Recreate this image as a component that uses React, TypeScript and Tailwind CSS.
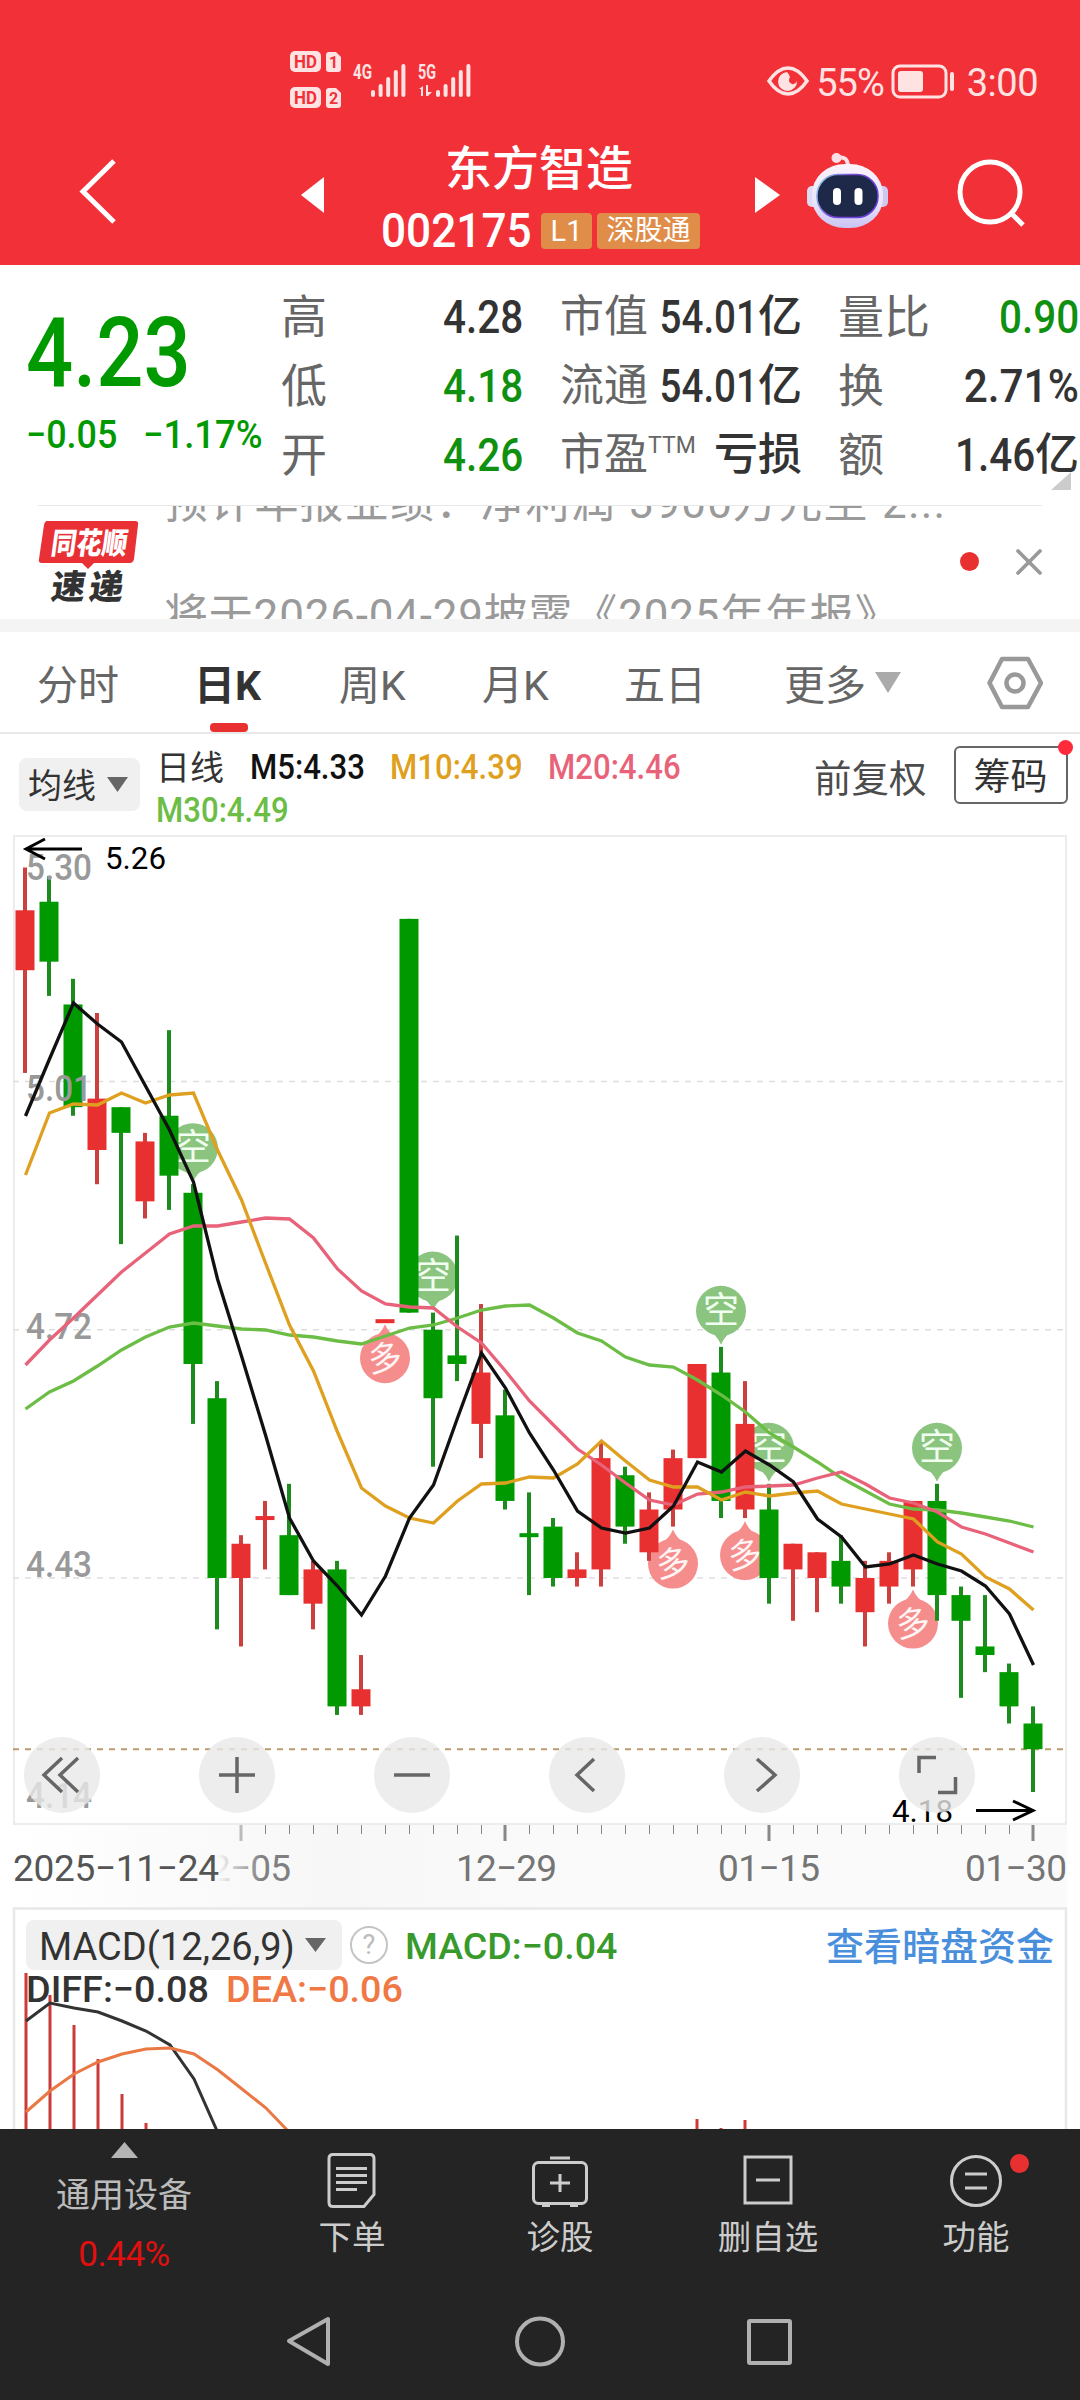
import type { ReactNode } from "react";
import { X } from "lucide-react";

const UP = "#e83030";
const DOWN = "#009900";

// [open/close top, open/close bottom, high, low, direction]
type Candle = [number, number, number, number, "up" | "down"];

const candles: Candle[] = [
  [5.21, 5.14, 5.26, 5.02, "up"],
  [5.22, 5.15, 5.25, 5.11, "down"],
  [5.1, 4.98, 5.13, 4.97, "down"],
  [4.99, 4.93, 5.09, 4.89, "up"],
  [4.98, 4.95, 4.98, 4.82, "down"],
  [4.94, 4.87, 4.95, 4.85, "up"],
  [4.97, 4.9, 5.07, 4.86, "down"],
  [4.88, 4.68, 4.89, 4.61, "down"],
  [4.64, 4.43, 4.66, 4.37, "down"],
  [4.47, 4.43, 4.48, 4.35, "up"],
  [4.5, 4.5, 4.52, 4.44, "up"],
  [4.48, 4.41, 4.54, 4.41, "down"],
  [4.44, 4.4, 4.45, 4.37, "up"],
  [4.44, 4.28, 4.45, 4.27, "down"],
  [4.3, 4.28, 4.34, 4.27, "up"],
  [4.73, 4.73, 4.73, 4.73, "up"],
  [5.2, 4.74, 5.2, 4.74, "down"],
  [4.72, 4.64, 4.74, 4.56, "down"],
  [4.69, 4.68, 4.83, 4.66, "down"],
  [4.67, 4.61, 4.75, 4.57, "up"],
  [4.62, 4.52, 4.65, 4.51, "down"],
  [4.48, 4.48, 4.53, 4.41, "down"],
  [4.49, 4.43, 4.5, 4.42, "down"],
  [4.44, 4.43, 4.46, 4.42, "up"],
  [4.57, 4.44, 4.59, 4.42, "up"],
  [4.55, 4.49, 4.56, 4.47, "down"],
  [4.51, 4.46, 4.53, 4.45, "up"],
  [4.57, 4.51, 4.58, 4.49, "up"],
  [4.68, 4.57, 4.68, 4.57, "up"],
  [4.67, 4.52, 4.7, 4.5, "down"],
  [4.61, 4.51, 4.66, 4.5, "up"],
  [4.51, 4.43, 4.54, 4.4, "down"],
  [4.47, 4.44, 4.47, 4.38, "up"],
  [4.46, 4.43, 4.46, 4.39, "up"],
  [4.45, 4.42, 4.48, 4.4, "down"],
  [4.43, 4.39, 4.45, 4.35, "up"],
  [4.45, 4.42, 4.46, 4.4, "up"],
  [4.52, 4.44, 4.52, 4.42, "up"],
  [4.52, 4.41, 4.54, 4.38, "down"],
  [4.41, 4.38, 4.42, 4.29, "down"],
  [4.35, 4.34, 4.41, 4.32, "down"],
  [4.32, 4.28, 4.33, 4.26, "down"],
  [4.26, 4.23, 4.28, 4.18, "down"],
];

const maLines = [
  {
    color: "#6cbd45",
    ys: [1409, 1392, 1381, 1366, 1350, 1337, 1327, 1323, 1326, 1329, 1330, 1335, 1337, 1341, 1344, 1336, 1328, 1325, 1318, 1310, 1306, 1305, 1318, 1333, 1341, 1357, 1365, 1367, 1380, 1395, 1412, 1433, 1447, 1462, 1478, 1491, 1504, 1509, 1510, 1513, 1517, 1521, 1527],
  },
  {
    color: "#e8637a",
    ys: [1365, 1340, 1318, 1295, 1272, 1253, 1234, 1226, 1226, 1222, 1218, 1219, 1238, 1269, 1291, 1304, 1307, 1308, 1327, 1343, 1371, 1401, 1425, 1449, 1465, 1483, 1500, 1505, 1494, 1492, 1487, 1486, 1485, 1478, 1472, 1484, 1498, 1503, 1512, 1527, 1534, 1543, 1552],
  },
  {
    color: "#dfa020",
    ys: [1175, 1113, 1104, 1105, 1093, 1103, 1095, 1093, 1150, 1200, 1263, 1325, 1371, 1432, 1488, 1506, 1518, 1523, 1501, 1484, 1483, 1477, 1478, 1464, 1441, 1461, 1480, 1487, 1487, 1500, 1492, 1496, 1493, 1491, 1504, 1509, 1514, 1519, 1542, 1554, 1577, 1589, 1610],
  },
  {
    color: "#111111",
    ys: [1116, 1059, 1003, 1024, 1042, 1086, 1130, 1182, 1279, 1356, 1435, 1518, 1561, 1586, 1615, 1576, 1518, 1485, 1418, 1353, 1388, 1433, 1470, 1511, 1528, 1533, 1528, 1506, 1462, 1472, 1451, 1465, 1482, 1519, 1537, 1567, 1564, 1555, 1564, 1571, 1586, 1614, 1665],
  },
];

const shorts = [7, 17, 29, 31, 38];
const longs = [15, 27, 30, 37];

const cx = (i: number) => 25 + i * 24;
const py = (price: number) => 867.5 + (5.26 - price) * 856;

const axisLabels = [
  { text: "5.30", y: 880 },
  { text: "5.01", y: 1101 },
  { text: "4.72", y: 1339 },
  { text: "4.43", y: 1577 },
  { text: "4.14", y: 1808 },
];

function StatusBar() {
  return (
    <div className="flex h-[130px] items-start justify-between pl-[289px] pr-[42px] pt-[50px]">
      <svg width="186" height="62" viewBox="289 50 186 62" fill="#ffe3e3" fontFamily="Roboto" fontWeight="700">
        {[51, 87].map((y, i) => (
          <g key={y}>
            <rect x="290" y={y} width="31" height="21" rx="5" />
            <text x="294" y={y + 17} fontSize="18" fill="#f23038" textLength="23" lengthAdjust="spacingAndGlyphs">HD</text>
            <path d={`M329 ${y + 1}h7l5 5v12q0 3-3 3h-9q-3 0-3-3v-14q0-3 3-3z`} />
            <text x="329" y={y + 17} fontSize="16" fill="#f23038">{i + 1}</text>
          </g>
        ))}
        <text x="353" y="79" fontSize="20" textLength="19" lengthAdjust="spacingAndGlyphs">4G</text>
        <text x="418" y="79" fontSize="20" textLength="18" lengthAdjust="spacingAndGlyphs">5G</text>
        {[371, 436].map((x) =>
          [7, 13, 20, 27, 33].map((h, i) => (
            <rect key={`${x}-${i}`} x={x + i * 7.6} y={97 - h} width="4" height={h} rx="2" />
          )),
        )}
        <path d="M419 89l4-3v10h-2v-7zM426 85h2v7h4l-4 4h-2z" />
      </svg>
      <div className="flex h-[62px] items-center text-[#ffe3e3]">
        <svg width="42" height="30" viewBox="0 0 42 30" fill="none" stroke="#ffe3e3" strokeWidth="3.5">
          <path d="M2 15Q11 2 21 2T40 15Q31 28 21 28T2 15z" />
          <path d="M20 6a9.5 9.5 0 1 0 10 9q-2 4-5 3q-5-2-2-7q-1-3-3-5z" fill="#ffe3e3" stroke="none" />
        </svg>
        <span className="ml-[7px] pt-[3px] text-[38px] leading-none tracking-[-1px]">55%</span>
        <svg className="ml-[7px]" width="64" height="35" viewBox="0 0 64 35" fill="none" stroke="#ffe3e3" strokeWidth="3">
          <rect x="2" y="2" width="53" height="31" rx="7" />
          <rect x="7" y="7" width="25" height="21" rx="3" fill="#ffe3e3" stroke="none" />
          <path d="M61 10v15" strokeWidth="4" strokeLinecap="round" />
        </svg>
        <span className="ml-[12px] pt-[3px] text-[38px] leading-none tracking-[-0.5px]">3:00</span>
      </div>
    </div>
  );
}

function Robot() {
  return (
    <svg width="84" height="80" viewBox="805 150 84 80">
      <defs>
        <linearGradient id="shell" x1="0" y1="0" x2="0" y2="1">
          <stop offset="0" stopColor="#fbf3fb" />
          <stop offset="0.6" stopColor="#e9e6fa" />
          <stop offset="1" stopColor="#c9c4f2" />
        </linearGradient>
        <linearGradient id="rim" x1="0" y1="0" x2="1" y2="0.4">
          <stop offset="0" stopColor="#8fe0ea" />
          <stop offset="0.5" stopColor="#7a48d8" />
          <stop offset="1" stopColor="#6a3fe0" />
        </linearGradient>
      </defs>
      <path d="M837 158q11-3 11 9" fill="none" stroke="#fbdfe6" strokeWidth="4" />
      <circle cx="836.500" cy="158" r="5" fill="#fbdfe6" />
      <rect x="807" y="186" width="12" height="21" rx="5" fill="#dfdaf6" />
      <rect x="876" y="186" width="12" height="21" rx="5" fill="#cfc8f3" />
      <rect x="812" y="164" width="71" height="64" rx="33" ry="30" fill="url(#shell)" />
      <rect x="817" y="174.500" width="61" height="43" rx="21" fill="#1e2848" stroke="url(#rim)" strokeWidth="1.500" />
      <rect x="833" y="188" width="8" height="17" rx="4" fill="#fff" />
      <rect x="854.500" y="188" width="8" height="17" rx="4" fill="#fff" />
    </svg>
  );
}

function Header() {
  return (
    <div className="flex h-[135px] items-start text-white">
      <svg className="ml-[76px] mt-[27px]" width="44" height="70" viewBox="0 0 44 70" fill="none" stroke="#fff" strokeWidth="5">
        <path d="M38 4L7 34.500L38 65" />
      </svg>
      <svg className="ml-[181px] mt-[46px]" width="24" height="38" viewBox="0 0 24 38" fill="#fff">
        <path d="M23 1v36L0 19z" />
      </svg>
      <div className="ml-[33px] flex w-[362px] flex-col items-center">
        <h1 className="mt-[16px] h-[46px] text-[47px] font-medium leading-[46px]">东方智造</h1>
        <div className="mt-[19px] flex h-[40px] w-full items-center pl-[23px]">
          <span className="w-[150px] origin-left scale-x-[0.92] text-[48px] font-medium leading-none">002175</span>
          <span className="ml-[10px] flex h-[36px] w-[51px] items-center justify-center rounded-[4px] bg-[#e08d4a] text-[29px] leading-none">L1</span>
          <span className="ml-[5px] flex h-[36px] w-[103px] shrink-0 items-center justify-center rounded-[4px] bg-[#e08d4a] text-[28px] leading-none">深股通</span>
        </div>
      </div>
      <svg className="ml-[35px] mt-[46px]" width="26" height="38" viewBox="0 0 26 38" fill="#fff">
        <path d="M0 1v36L25 19z" />
      </svg>
      <div className="ml-[24px] mt-[20px]">
        <Robot />
      </div>
      <svg className="ml-[67px] mt-[28px]" width="72" height="72" viewBox="956 158 72 72" fill="none" stroke="#fff" strokeWidth="5">
        <circle cx="990" cy="192" r="30" />
        <path d="M1011 213l12 12" />
      </svg>
    </div>
  );
}

type RowProps = {
  label: ReactNode;
  value?: string;
  unit?: string;
  color?: string;
  labelSize?: string;
  fit?: string;
};

function Row({ label, value, unit, color = "text-[#333]", labelSize = "text-[46px]", fit = "scale-x-[0.86]" }: RowProps) {
  return (
    <div className="flex h-[69px] items-center justify-between whitespace-nowrap">
      <span className={`flex leading-none text-[#666] ${labelSize}`}>{label}</span>
      <span className={`flex items-center font-medium leading-none ${color}`}>
        {value && <span className={`-ml-6 origin-right text-[47px] leading-none ${fit}`}>{value}</span>}
        {unit && <span className="text-[44px] leading-none">{unit}</span>}
      </span>
    </div>
  );
}

function Quote() {
  return (
    <div className="relative flex h-[240px] bg-white pt-[17px]">
      <div className="w-[281px] pl-[26px] text-[#009900]">
        <div className="mt-[23px] h-[96px] w-[170px] origin-left scale-x-[0.865] text-[96px] font-medium leading-none">4.23</div>
        <div className="mt-[15px] flex text-[39px] font-medium leading-none">
          <span className="w-[117px] origin-left scale-x-[0.92]">−0.05</span>
          <span className="origin-left scale-x-[0.935]">−1.17%</span>
        </div>
      </div>
      <div className="w-[242px]">
        <Row label="高" value="4.28" />
        <Row label="低" value="4.18" color="text-[#109010]" />
        <Row label="开" value="4.26" color="text-[#109010]" />
      </div>
      <div className="ml-[37px] w-[242px]">
        <Row label="市值" value="54.01" unit="亿" labelSize="text-[44px]" fit="scale-x-[0.82]" />
        <Row label="流通" value="54.01" unit="亿" labelSize="text-[44px]" fit="scale-x-[0.82]" />
        <Row label={<>市盈<sup className="top-0 pt-[1px] text-[23px] leading-none">TTM</sup></>} unit="亏损" labelSize="text-[44px]" />
      </div>
      <div className="ml-[36px] w-[241px]">
        <Row label="量比" value="0.90" color="text-[#109010]" />
        <Row label="换" value="2.71%" fit="scale-x-[0.9]" />
        <Row label="额" value="1.46" unit="亿" />
      </div>
      <svg className="absolute right-[9px] top-[207px]" width="20" height="18" viewBox="0 0 20 18" fill="#ccc">
        <path d="M20 0v18H0z" />
      </svg>
    </div>
  );
}

function Ticker() {
  return (
    <div className="relative flex h-[114px] overflow-hidden bg-white text-[44px] text-[#9a9a9a]">
      <div className="absolute left-[38px] right-[38px] top-0 h-px bg-[#e8e8e8]" />
      <svg className="ml-[36px] mt-[14px] shrink-0" width="106" height="92" viewBox="36 519 106 92" fontFamily="'Noto Sans CJK SC'" fontWeight="900">
        <path d="M47 521H135q4 0 3 4l-4 34q-1 4-4 4H94l-6 6l-6-6H42q-4 0-3-4l5-34q1-4 3-4z" fill="#e83035" />
        <text transform="translate(50 554) skewX(-8)" fontSize="30" fill="#fff" textLength="76" lengthAdjust="spacingAndGlyphs">同花顺</text>
        <text transform="translate(50 599) skewX(-8)" fontSize="34" fill="#333" textLength="72">速递</text>
      </svg>
      <div className="-mt-[27px] ml-[22px] flex w-[790px] flex-col whitespace-nowrap leading-[50px]">
        <span className="h-[113px] shrink-0 tracking-[1.2px]">预计年报业绩：净利润-3900万元至-2...</span>
        <span className="h-[50px] shrink-0 tracking-[0.8px]">将于2026-04-29披露《2025年年报》</span>
      </div>
      <span className="ml-[6px] mt-[47px] size-[19px] rounded-full bg-[#e83030]" />
      <X className="ml-[28px] mt-[35px]" size={44} strokeWidth={2} color="#999" />
    </div>
  );
}

const tabs = [
  { text: "分时", className: "w-[157px]" },
  { text: "日K", className: "w-[145px] font-bold text-[#333]" },
  { text: "周K", className: "w-[143px]" },
  { text: "月K", className: "w-[142px]" },
  { text: "五日", className: "w-[160px]" },
];

function Tabs() {
  return (
    <div className="relative flex h-[102px] items-center border-b-2 border-[#e8e8e8] bg-white pl-[37px] text-[41px] leading-none text-[#666]">
      {tabs.map((tab) => (
        <span key={tab.text} className={`pt-[8px] ${tab.className}`}>{tab.text}</span>
      ))}
      <span className="pt-[8px]">更多</span>
      <svg className="ml-[9px]" width="26" height="21" viewBox="0 0 26 21" fill="#aaa">
        <path d="M0 0h26L13 21z" />
      </svg>
      <svg className="ml-[86px] mt-[2px]" width="56" height="54" viewBox="0 0 56 54" fill="none" stroke="#999" strokeWidth="4.500" strokeLinejoin="round">
        <path d="M15 3h26l13 24l-13 24H15L2.500 27z" />
        <circle cx="28" cy="27" r="8.500" />
      </svg>
      <span className="absolute bottom-0 left-[210px] h-[9px] w-[38px] rounded-[4px] bg-[#e83030]" />
    </div>
  );
}

function MaBar() {
  return (
    <div className="flex h-[101px] bg-white pl-[19px]">
      <div className="mt-[24px] flex h-[53px] w-[121px] items-center rounded-[8px] bg-[#f0f0f0] pl-[9px] pt-[2px] text-[34px] leading-none text-[#333]">
        均线
        <svg className="mb-[3px] ml-[11px]" width="21" height="15" viewBox="0 0 21 15" fill="#666">
          <path d="M0 0h21L10.500 15z" />
        </svg>
      </div>
      <div className="ml-[16px] w-[658px] whitespace-nowrap pt-[12px] text-[35px] leading-[44px]">
        <div className="flex h-[43px]">
          <span className="w-[94px] text-[34px] text-[#333]">日线</span>
          <span className="w-[140px] origin-left scale-x-[0.89] font-medium text-[#111]">M5:4.33</span>
          <span className="w-[158px] origin-left scale-x-[0.89] font-medium text-[#dfa020]">M10:4.39</span>
          <span className="origin-left scale-x-[0.89] font-medium text-[#e8637a]">M20:4.46</span>
        </div>
        <div className="w-[150px] origin-left scale-x-[0.89] font-medium text-[#6cbd45]">M30:4.49</div>
      </div>
      <span className="mt-[27px] text-[37.500px] leading-[37px] text-[#4c4c4c]">前复权</span>
      <div className="relative ml-[27px] mt-[12px] flex h-[58px] w-[114px] items-center justify-center rounded-[6px] border-2 border-[#666] pt-[4px] text-[37px] leading-none text-[#333]">
        筹码
        <span className="absolute -right-[7px] -top-[8px] size-[15px] rounded-full bg-[#ff2b3c]" />
      </div>
    </div>
  );
}

function KLineChart() {
  return (
    <svg className="block" width="1080" height="1072" viewBox="0 835 1080 1072" fontFamily="Roboto, 'Noto Sans CJK SC', sans-serif">
      <defs>
        <linearGradient id="axisFade" x1="0" y1="0" x2="1" y2="0">
          <stop offset="0" stopColor="#fff" />
          <stop offset="0.300" stopColor="#f7f7f7" />
          <stop offset="0.500" stopColor="#fafafa" />
          <stop offset="1" stopColor="#fafafa" />
        </linearGradient>
        <linearGradient id="dateFade" x1="0" y1="0" x2="1" y2="0">
          <stop offset="0.450" stopColor="#fafafa" />
          <stop offset="1" stopColor="#f8f8f8" stopOpacity="0" />
        </linearGradient>
      </defs>
      <rect x="13" y="1825" width="1054" height="82" fill="url(#axisFade)" />
      <rect x="14" y="836" width="1052" height="988" fill="#fff" stroke="#ececec" strokeWidth="2" />

      {/* Grid */}
      {[5.01, 4.72, 4.43].map((p) => (
        <path key={p} d={`M13 ${py(p)}H1066`} stroke="#dedede" strokeWidth="1.500" strokeDasharray="6 6" />
      ))}
      <path d={`M13 ${py(4.23)}H1066`} stroke="#b89b6e" strokeWidth="2" strokeDasharray="6 6" />

      {/* Signals */}
      {shorts.map((i) => {
        const y = py(candles[i][2]) - 36;
        return (
          <g key={i}>
            <path d={`M${cx(i) - 14} ${y + 19}Q${cx(i) - 4} ${y + 24} ${cx(i)} ${y + 34}Q${cx(i) + 4} ${y + 24} ${cx(i) + 14} ${y + 19}z`} fill="#8bc47f" />
            <circle cx={cx(i)} cy={y} r="25" fill="#8bc47f" />
            <text x={cx(i)} y={y + 12} fontSize="36" textAnchor="middle" fill="#f0fff0">空</text>
          </g>
        );
      })}
      {longs.map((i) => {
        const y = py(candles[i][3]) + 37;
        return (
          <g key={i}>
            <path d={`M${cx(i) - 14} ${y - 19}Q${cx(i) - 4} ${y - 24} ${cx(i)} ${y - 34}Q${cx(i) + 4} ${y - 24} ${cx(i) + 14} ${y - 19}z`} fill="#f68d8d" />
            <circle cx={cx(i)} cy={y} r="25" fill="#f68d8d" />
            <text x={cx(i)} y={y + 12} fontSize="34" textAnchor="middle" fill="#fff5f5" transform={`rotate(-8 ${cx(i)} ${y})`}>多</text>
          </g>
        );
      })}

      {/* Candles */}
      {candles.map(([top, bottom, high, low, dir], i) => {
        const color = dir === "up" ? UP : DOWN;
        const height = Math.max(py(bottom) - py(top), 4);
        return (
          <g key={i}>
            <rect x={cx(i) - 2} y={py(high)} width="4" height={py(low) - py(high)} fill={dir === "up" ? "#cc4040" : "#1c8c1c"} />
            <rect x={cx(i) - 9.5} y={top === bottom ? py(top) - 2 : py(top)} width="19" height={height} fill={color} />
          </g>
        );
      })}

      {/* Price labels */}
      {axisLabels.map((label) => (
        <text key={label.text} x="26" y={label.y} fontSize="37" fontWeight="500" fill="#999" textLength="66" lengthAdjust="spacingAndGlyphs">{label.text}</text>
      ))}

      {/* Moving averages */}
      {maLines.map((line) => (
        <polyline key={line.color} points={line.ys.map((y, i) => `${cx(i) + 0.5},${y}`).join(" ")} fill="none" stroke={line.color} strokeWidth="3.300" />
      ))}

      <g fill="none" stroke="#000" strokeWidth="3">
        <path d="M82 849H26M45 839L26 849L45 859" />
        <path d="M976 1810.500H1033M1013 1801L1033 1810.500L1013 1820" />
      </g>
      <text x="105" y="869" fontSize="32" fill="#000" textLength="61" lengthAdjust="spacingAndGlyphs">5.26</text>
      <text x="892" y="1822" fontSize="32" fill="#000" textLength="61" lengthAdjust="spacingAndGlyphs">4.18</text>

      {/* Controls */}
      {[62, 237, 412, 587, 762, 937].map((x) => (
        <circle key={x} cx={x} cy="1775" r="38" fill="#e8e8e8" fillOpacity="0.800" />
      ))}
      <g fill="none" stroke="#666" strokeWidth="3.500">
        <path d="M62 1758L44 1775L62 1792M78 1758L60 1775L78 1792" />
        <path d="M219 1775H255M237 1757V1793" />
        <path d="M394 1775H430" />
        <path d="M594 1759L577 1775L594 1791" />
        <path d="M757 1759L775 1775L757 1791" />
        <path d="M919 1773V1757.500H936M938 1792.500H955.500V1777" />
      </g>

      {/* Time axis */}
      {candles.map((_, i) => {
        if (i < 9) return null;
        const major = (i - 9) % 11 === 0;
        return <rect key={i} x={major ? cx(i) - 1.5 : cx(i)} y="1825" width={major ? 3 : 1} height={major ? 16 : 9} fill={i === 9 ? "#bbb" : "#888"} />;
      })}
      <g fontSize="37" fill="#757575" lengthAdjust="spacing">
        <text x="190" y="1881" textLength="101" fill="#808080">12−05</text>
        <rect x="180" y="1848" width="82" height="40" fill="url(#dateFade)" />
        <text x="456" y="1881" textLength="101">12−29</text>
        <text x="718" y="1881" textLength="102">01−15</text>
        <text x="965" y="1881" textLength="102">01−30</text>
        <text x="13" y="1881" textLength="206" fill="#555">2025−11−24</text>
      </g>
    </svg>
  );
}

const macdBars = [
  [26, 1973], [50, 1995], [74, 2025], [98, 2059], [122, 2094], [146, 2123], [697, 2119], [721, 2128], [745, 2120],
];

function Macd() {
  return (
    <div className="relative h-[222px] bg-white">
      <svg className="absolute inset-0" width="1080" height="222" viewBox="0 1907 1080 222" fill="none">
        <path d="M14 2130V1908.500H1066V2130" stroke="#e8e8e8" strokeWidth="2.500" />
        {macdBars.map(([x, y]) => (
          <rect key={x} x={x - 1.5} y={y} width="3" height={2130 - y} fill="#cc3a3a" />
        ))}
        <polyline points="26,2021 50,2003 74,2008 98,2012 122,2021 146,2031 170,2045 194,2079 218,2133" stroke="#333" strokeWidth="3" />
        <polyline points="26,2112 50,2091 74,2074 98,2062 122,2054 146,2049 170,2048 194,2054 218,2070 242,2089 266,2108 288,2131" stroke="#ea7845" strokeWidth="3" />
      </svg>
      <div className="relative flex h-[63px] items-center whitespace-nowrap pl-[26px] pt-[13px] leading-none">
        <div className="flex h-[50px] w-[316px] items-center rounded-[8px] bg-[#f0f0f0] pl-[13px] text-[38px] text-[#333]">
          <span className="w-[266px] origin-left pt-[3px]">MACD(12,26,9)</span>
          <svg width="21" height="14" viewBox="0 0 21 14" fill="#666">
            <path d="M0 0h21L10.500 14z" />
          </svg>
        </div>
        <span className="ml-[8px] flex size-[38px] items-center justify-center rounded-full border-[2.5px] border-[#c4c4c4] text-[27px] text-[#bbb]">?</span>
        <span className="ml-[17px] w-[240px] origin-left scale-x-[1.015] pt-[2px] text-[37px] font-medium text-[#389a2b]">MACD:−0.04</span>
        <span className="ml-auto pr-[26px] pt-[4px] text-[38px] font-medium text-[#4a8fdc]">查看暗盘资金</span>
      </div>
      <div className="relative flex pl-[26px] pt-[1px] text-[37px] font-medium leading-none">
        <span className="w-[200px] origin-left scale-x-[1.02] text-[#333]">DIFF:−0.08</span>
        <span className="origin-left scale-x-[1.02] text-[#f07845]">DEA:−0.06</span>
      </div>
    </div>
  );
}

const navItems = [
  {
    text: "下单",
    icon: (
      <>
        <path d="M9 2.500h37q4 0 4 4v36l-10 12H9q-4 0-4-4V6.500q0-4 4-4z" />
        <path d="M12 16.500h31M12 23.500h31M12 30.500h31M12 37.500h21" />
      </>
    ),
  },
  {
    text: "诊股",
    icon: (
      <>
        <rect x="1.500" y="10.500" width="53" height="41" rx="5" />
        <path d="M18 6h20M10 53.500h8M38 53.500h8M28 22v18M18 31h20" />
      </>
    ),
  },
  {
    text: "删自选",
    icon: (
      <>
        <rect x="5" y="5" width="46" height="46" />
        <path d="M16 28h24" />
      </>
    ),
  },
  {
    text: "功能",
    icon: (
      <>
        <circle cx="28" cy="29" r="24.500" />
        <path d="M17 22h22M17 36h22" />
      </>
    ),
  },
];

function BottomNav() {
  return (
    <div className="flex h-[151px] bg-[#242424] text-[33px] leading-none text-[#ccc]">
      <div className="flex w-[248px] flex-col pl-[43px] pt-[13px]">
        <div className="flex w-[162px] flex-col items-center">
          <svg width="27" height="16" viewBox="0 0 27 16" fill="#b5b5b5">
            <path d="M13.500 0L27 16H0z" />
          </svg>
          <span className="mt-[20px] whitespace-nowrap text-[34px] text-[#bbb]">通用设备</span>
          <span className="mt-[25px] text-[35px] tracking-[-0.5px] text-[#e01010]">0.44%</span>
        </div>
      </div>
      {navItems.map((item, i) => (
        <div key={item.text} className="relative flex w-[208px] flex-col items-center pt-[23px]">
          <svg width="56" height="58" viewBox="0 0 56 58" fill="none" stroke="#ccc" strokeWidth="3">
            {item.icon}
          </svg>
          <span className="mt-[11px] text-[33.500px]">{item.text}</span>
          {i === 3 && <span className="absolute left-[138px] top-[25px] size-[19px] rounded-full bg-[#e83030]" />}
        </div>
      ))}
    </div>
  );
}

function SystemNav() {
  return (
    <div className="flex h-[120px] items-center bg-[#242424] pl-[284px]">
      <svg className="mt-[2px]" width="510" height="56" viewBox="284 2312 510 56" fill="none" stroke="#b0b0b0" strokeWidth="4" strokeLinejoin="round">
        <path d="M289 2340L328 2318V2363z" />
        <circle cx="540" cy="2340.500" r="23" />
        <rect x="749" y="2320" width="41" height="42" rx="1" />
      </svg>
    </div>
  );
}

export default function App() {
  return (
    <div className="flex h-[2400px] w-[1080px] flex-col overflow-hidden bg-white font-['Roboto','Noto_Sans_CJK_SC',sans-serif]">
      <div className="h-[265px] shrink-0 bg-[#f23038]">
        <StatusBar />
        <Header />
      </div>
      <Quote />
      <Ticker />
      <div className="h-[13px] bg-[#f4f4f4]" />
      <Tabs />
      <MaBar />
      <KLineChart />
      <Macd />
      <BottomNav />
      <SystemNav />
    </div>
  );
}
